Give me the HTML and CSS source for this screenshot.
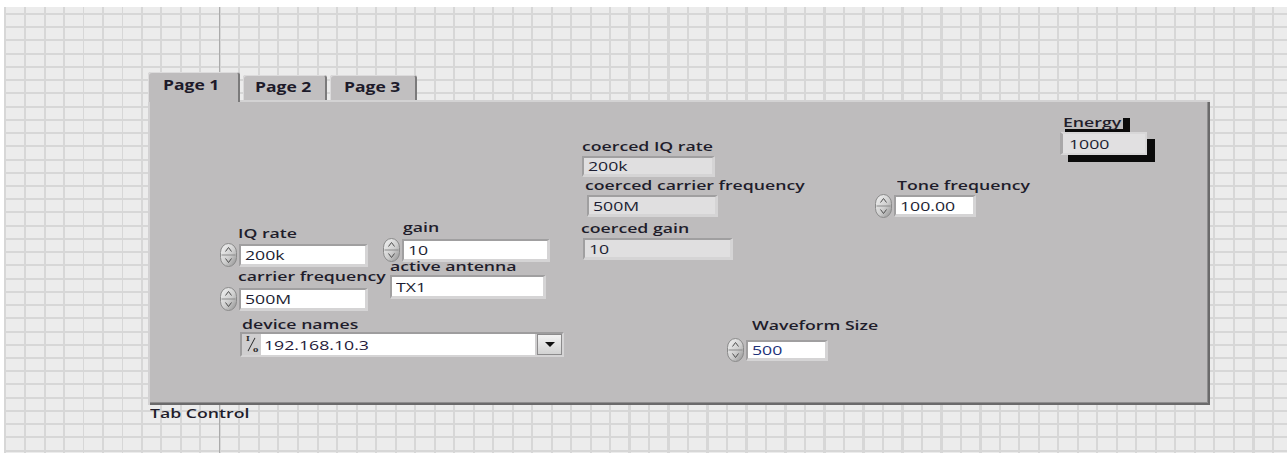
FILE: index.html
```html
<!DOCTYPE html>
<html lang="en">
<head>
<meta charset="utf-8">
<title>Front Panel</title>
<link rel="stylesheet" href="styles.css">
</head>
<body>
<svg class="defs" aria-hidden="true">
  <defs>
    <linearGradient id="knob" x1="0" y1="0" x2="1" y2="1">
      <stop offset="0" stop-color="#f4f4f4"/>
      <stop offset="0.55" stop-color="#cfcfcf"/>
      <stop offset="1" stop-color="#8e8e8e"/>
    </linearGradient>
  </defs>
  <symbol id="spin" viewBox="0 0 17 24">
    <rect x="0.5" y="0.5" width="16" height="23" rx="8" ry="9" fill="url(#knob)" stroke="#8a8a8a"/>
    <line x1="1.5" y1="12" x2="15.5" y2="12" stroke="#8a8a8a"/>
    <path d="M5.5 8.5 L8.5 4.5 L11.5 8.5" fill="none" stroke="#4f4f4f" stroke-width="1"/>
    <path d="M5.5 15.5 L8.5 19.5 L11.5 15.5" fill="none" stroke="#4f4f4f" stroke-width="1"/>
  </symbol>
</svg>

<main class="canvas">
  <div class="tabctl">
    <div class="tabs">
      <div class="tab active"><span class="txt">Page 1</span></div>
      <div class="tab tab2"><span class="txt">Page 2</span></div>
      <div class="tab tab3"><span class="txt">Page 3</span></div>
    </div>

    <div class="page">
      <!-- coerced readbacks -->
      <div class="lbl l-ciq"><span class="txt">coerced IQ rate</span></div>
      <div class="fld ind f-ciq"><span class="txt">200k</span></div>

      <div class="lbl l-ccf"><span class="txt">coerced carrier frequency</span></div>
      <div class="fld ind f-ccf"><span class="txt">500M</span></div>

      <div class="lbl l-cg"><span class="txt">coerced gain</span></div>
      <div class="fld ind f-cg"><span class="txt">10</span></div>

      <!-- energy readout -->
      <div class="energy-lbl"><span class="txt">Energy</span></div>
      <div class="energy-ind"><span class="txt">1000</span></div>

      <!-- tone -->
      <div class="lbl l-tone"><span class="txt">Tone frequency</span></div>
      <div class="num n-tone">
        <svg class="spin"><use href="#spin"/></svg>
        <div class="fld f-tone"><span class="txt">100.00</span></div>
      </div>

      <!-- radio settings -->
      <div class="lbl l-iq"><span class="txt">IQ rate</span></div>
      <div class="num n-iq">
        <svg class="spin"><use href="#spin"/></svg>
        <div class="fld f-iq"><span class="txt">200k</span></div>
      </div>

      <div class="lbl l-cf"><span class="txt">carrier frequency</span></div>
      <div class="num n-cf">
        <svg class="spin"><use href="#spin"/></svg>
        <div class="fld f-cf"><span class="txt">500M</span></div>
      </div>

      <div class="lbl l-gain"><span class="txt">gain</span></div>
      <div class="num n-gain">
        <svg class="spin"><use href="#spin"/></svg>
        <div class="fld f-gain"><span class="txt">10</span></div>
      </div>

      <div class="lbl l-ant"><span class="txt">active antenna</span></div>
      <div class="fld f-ant"><span class="txt">TX1</span></div>

      <div class="lbl l-dev"><span class="txt">device names</span></div>
      <div class="combo">
        <div class="io"><span class="io-i">I</span><span class="io-s"></span><span class="io-o">o</span></div>
        <div class="combo-text"><span class="txt">192.168.10.3</span></div>
        <div class="combo-btn"><span class="caret"></span></div>
      </div>

      <!-- waveform -->
      <div class="lbl l-wave"><span class="txt">Waveform Size</span></div>
      <div class="num n-wave">
        <svg class="spin"><use href="#spin"/></svg>
        <div class="fld f-wave"><span class="txt blue">500</span></div>
      </div>
    </div>

    <div class="caption"><span class="txt">Tab Control</span></div>
  </div>
</main>
</body>
</html>
```

FILE: styles.css
```css
* {
  box-sizing: border-box;
}

body {
  margin: 0;
  background: #ffffff;
  font-family: "Open Sans", "Noto Sans", sans-serif;
  color: #1f1d2b;
  overflow: hidden;
}

.defs {
  position: absolute;
  width: 0;
  height: 0;
}

/* panel grid, with the darker origin line */
.canvas {
  display: block;
  margin: 7px 0 0 4px;
  height: 446px;
  padding: 65px 0 0 144px;
  background-color: #ececec;
  background-image:
    linear-gradient(to right, transparent 215px, #ababab 215px, #ababab 216px, transparent 216px),
    repeating-linear-gradient(to right, transparent 0 0.5px, #d7d7d7 0.5px 2.5px, transparent 2.5px 19.5px),
    repeating-linear-gradient(to bottom, transparent 0 6px, #d7d7d7 6px 8px, transparent 8px 13.23px);
}

/* text is drawn wide, as LabVIEW panels on this display */
.txt {
  display: inline-block;
  white-space: nowrap;
  transform: scaleX(1.36);
  transform-origin: 0 50%;
}

/* ---------- tab control ---------- */
.tabctl {
  width: 1062px;
}

.tabs {
  position: relative;
  z-index: 1;
  display: flex;
  align-items: flex-end;
  gap: 3px;
  height: 28px;
}

.tab {
  height: 25px;
  background: #c1bfc0;
  border-radius: 3px 3px 0 0;
  box-shadow: inset 1px 1px 0 #dcdbdc, inset -2px 0 0 #7b7a7b;
  font-size: 14px;
  font-weight: 700;
  line-height: 24px;
  color: #1d1a2a;
}

.tab .txt {
  transform: scaleX(1.25);
}

.tab.active {
  width: 92px;
  height: 30px;
  margin-bottom: -2px;
  padding-left: 15px;
  background: #bebcbd;
  line-height: 26px;
}

.tab2 {
  width: 84px;
  padding-left: 12px;
}

.tab3 {
  width: 87px;
  padding-left: 14px;
}

.page {
  position: relative;
  height: 305px;
  background: #bebcbd;
  box-shadow:
    inset 2px 2px 0 #d3d2d3,
    inset -2px -2px 0 #6b6a6b,
    inset -3px -3px 0 #8f8e8f;
}

.caption {
  padding-left: 2px;
  height: 16px;
  font-size: 13px;
  font-weight: 600;
  line-height: 16px;
}

/* ---------- labels ---------- */
.lbl {
  position: absolute;
  font-size: 13px;
  font-weight: 600;
  line-height: 16px;
  white-space: nowrap;
  color: #1f1d2b;
}

.l-ciq  { left: 434px; top: 38px; }
.l-ccf  { left: 437px; top: 77px; }
.l-cg   { left: 433px; top: 120px; }
.l-tone { left: 749px; top: 77px; }
.l-iq   { left: 90px;  top: 125px; }
.l-cf   { left: 90px;  top: 168px; }
.l-gain { left: 255px; top: 119px; }
.l-ant  { left: 242px; top: 158px; }
.l-dev  { left: 94px;  top: 216px; }
.l-wave { left: 604px; top: 217px; }

/* ---------- numeric / string fields ---------- */
.fld {
  display: flex;
  align-items: center;
  padding-left: 4px;
  border-style: solid;
  border-width: 2px 3px 3px 2px;
  border-color: #a09fa0 #d5d4d5 #d5d4d5 #a09fa0;
  background: #ffffff;
  font-size: 13px;
  font-weight: 400;
  color: #1c1e33;
}

.page > .fld {
  position: absolute;
}

.ind {
  background: #e0dfe0;
}

.f-ciq { left: 434px; top: 56px;  width: 133px; height: 21px; }
.f-ccf { left: 439px; top: 95px;  width: 131px; height: 22px; }
.f-cg  { left: 435px; top: 138px; width: 150px; height: 22px; }
.f-ant { left: 242px; top: 175px; width: 156px; height: 24px; }

.num {
  position: absolute;
  display: flex;
  align-items: center;
  gap: 2px;
}

.spin {
  width: 17px;
  height: 24px;
  flex: none;
}

.n-iq   { left: 72px;  top: 143px; }
.n-cf   { left: 72px;  top: 187px; }
.n-gain { left: 235px; top: 138px; }
.n-tone { left: 727px; top: 94px; }
.n-wave { left: 579px; top: 238px; }

.f-iq   { width: 129px; height: 23px; }
.f-cf   { width: 129px; height: 23px; }
.f-gain { width: 148px; height: 23px; }
.f-tone { width: 82px;  height: 22px; }
.f-wave { width: 82px;  height: 21px; }

.blue {
  color: #1d3279;
}

/* ---------- energy readout with black drop shadow ---------- */
.energy-lbl {
  position: absolute;
  left: 910px;
  top: 15px;
  width: 65px;
  height: 14px;
  padding-left: 5px;
  background: #bebcbd;
  box-shadow: 7px 3px 0 #0b0b0b;
  font-size: 13px;
  font-weight: 600;
  line-height: 14px;
}

.energy-ind {
  position: absolute;
  left: 912px;
  top: 32px;
  width: 87px;
  height: 23px;
  display: flex;
  align-items: center;
  padding-left: 6px;
  border-style: solid;
  border-width: 2px 2px 2px 3px;
  border-color: #d8d7d8 #d8d7d8 #d8d7d8 #a9a8a9;
  background: #e1e0e1;
  box-shadow: 8px 7px 0 #0b0b0b;
  font-size: 13px;
  color: #1c1e33;
}

/* ---------- ring / combo control ---------- */
.combo {
  position: absolute;
  left: 92px;
  top: 232px;
  width: 324px;
  height: 25px;
  display: flex;
  align-items: stretch;
  gap: 2px;
  padding-left: 3px;
  border-style: solid;
  border-width: 2px;
  border-color: #9e9d9e #d5d4d5 #d5d4d5 #9e9d9e;
  background: #cfcecf;
}

/* I/O name glyph: small I, a slash, small o */
.io {
  position: relative;
  width: 14px;
  flex: none;
  color: #2a2a2a;
  font-family: "DejaVu Serif", serif;
  font-weight: 700;
}

.io-i {
  position: absolute;
  left: 1px;
  top: 0;
  font-size: 8px;
  line-height: 9px;
}

.io-s {
  position: absolute;
  left: 6px;
  top: 3px;
  width: 1px;
  height: 15px;
  background: #2a2a2a;
  transform: rotate(28deg);
}

.io-o {
  position: absolute;
  left: 8px;
  top: 11px;
  font-size: 8px;
  line-height: 9px;
}

.combo-text {
  flex: 1;
  display: flex;
  align-items: center;
  padding-left: 3px;
  background: #ffffff;
  font-size: 13px;
  color: #25193a;
}

.combo-btn {
  width: 25px;
  flex: none;
  display: flex;
  align-items: center;
  justify-content: center;
  border: 1px solid #8c8b8c;
  background: linear-gradient(#f3f3f3, #d2d2d2);
}

.caret {
  width: 0;
  height: 0;
  border-left: 5px solid transparent;
  border-right: 5px solid transparent;
  border-top: 5px solid #111111;
}
```
